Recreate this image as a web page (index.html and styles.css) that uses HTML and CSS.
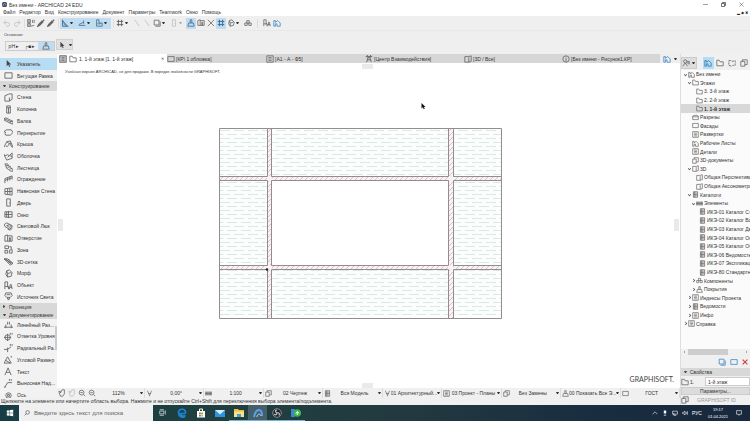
FILE: index.html
```html
<!DOCTYPE html>
<html lang="ru">
<head>
<meta charset="utf-8">
<title>Без имени - ARCHICAD 24 EDU</title>
<link rel="stylesheet" href="styles.css">
</head>
<body>
<svg class="defs" aria-hidden="true">
  <symbol id="undo" viewBox="0 0 10 10"><path d="M4 2 1 4.5 4 7M1 4.5h5a2.200 2.200 0 0 1 0 4.500H4"/></symbol>
  <symbol id="redo" viewBox="0 0 10 10"><path d="M6 2 9 4.500 6 7M9 4.500H4a2.200 2.200 0 0 0 0 4.500H6"/></symbol>
  <symbol id="find" viewBox="0 0 10 10"><path d="M1 1h3v3H1zM1 6h3v3H1z" stroke-width="1.300"/><path d="M7 1v4M9 1v4M5 9l4-1"/></symbol>
  <symbol id="dropper" viewBox="0 0 10 10"><path d="M1 9l1-2 4-4 1 1-4 4zM5.500 2.500l2 2M6.500 3.500 9 1" stroke-width="1.600"/></symbol>
  <symbol id="angle" viewBox="0 0 10 10"><path d="M2 1v8h7M2 2l6 7M3 5l3 3" stroke-width="1.200"/></symbol>
  <symbol id="slope" viewBox="0 0 10 10"><path d="M1 8h8M1 7l6-3M7 2v4"/></symbol>
  <symbol id="snap" viewBox="0 0 10 10"><path d="M2 1v8h7V5H5V1z" /><path d="M3 6h4"/></symbol>
  <symbol id="grid" viewBox="0 0 10 10"><path d="M3 1v8M7 1v8M1 3h8M1 7h8" stroke-width="1.200"/></symbol>
  <symbol id="sq" viewBox="0 0 10 10"><path d="M1.500 1.500h6v6h-6zM3 9h6V3"/></symbol>
  <symbol id="line" viewBox="0 0 10 10"><path d="M2 1l6 8"/></symbol>
  <symbol id="frame" viewBox="0 0 10 10"><path d="M1 2h8v6H1z"/></symbol>
  <symbol id="cursor" viewBox="0 0 10 10"><path class="fill" d="M3 1v7l1.600-1.500L6 9l1-.5-1.300-2.400H8z"/></symbol>
  <symbol id="wall" viewBox="0 0 10 10"><path d="M1 3l5-2h3v6L6 9H1zM6 9V5"/></symbol>
  <symbol id="column" viewBox="0 0 10 10"><path d="M3 1h4v8H3zM3 3h4M5 3v6"/></symbol>
  <symbol id="beam" viewBox="0 0 10 10"><path d="M0 3l2-1 8 4v3L7 8 0 4.500zM7 8V6l3 0M7 6 0 3"/></symbol>
  <symbol id="slab" viewBox="0 0 10 10"><path d="M0 4l3-2h5l2 3-3 3H2l-1-2 1-1z"/></symbol>
  <symbol id="roof" viewBox="0 0 10 10"><path d="M0 8l3-6 4-1 3 7-2-1-1-4-3 4H2M3 2l3 2"/></symbol>
  <symbol id="shell" viewBox="0 0 10 10"><path d="M0 3l2 1 2-1 2 1 3-3v6L3 9zM4 6l2-2 3 1"/></symbol>
  <symbol id="stair" viewBox="0 0 10 10"><path d="M1 1h3l1 2 2 1 1 2 2 1v2H7L5 7 3 6 2 3zM2 3l3 0M4 5l3-1M6 7l3-1"/></symbol>
  <symbol id="rail" viewBox="0 0 10 10"><path d="M1 9V4l8-3v4M1 6l8-3M4 3v4M6.500 2v4"/></symbol>
  <symbol id="curtain" viewBox="0 0 10 10"><path d="M1 2l8-1v8L1 8zM4 2v6M6.500 1.500v7M1 5h8"/></symbol>
  <symbol id="door" viewBox="0 0 10 10"><path d="M3 1h4v8H3zM6 5v1"/></symbol>
  <symbol id="window" viewBox="0 0 10 10"><path d="M1 2h8v6H1zM5 1v8M3 2v6M1 5h8"/></symbol>
  <symbol id="sky" viewBox="0 0 10 10"><path d="M0 3l3-2 6 3v2L6 8 1 5zM3 4l3-1 2 2-2 1zM4 8l3 1 2-2"/></symbol>
  <symbol id="opening" viewBox="0 0 10 10"><path d="M1 2l3-1v7H1zM4 2h5v6H4M6 4v4M6 4h1v4"/></symbol>
  <symbol id="zone" viewBox="0 0 10 10"><path d="M1 1h4v3H1zM1 6h3v3H1zM6 2h2v3M6 6l3-1v4H6z"/></symbol>
  <symbol id="mesh" viewBox="0 0 10 10"><path d="M0 2l4 0 6 5-3 2zM2 2l6 6M0 2l7 4 3 1M3 4l3-1M5 6l3-1"/></symbol>
  <symbol id="morph" viewBox="0 0 10 10"><path d="M3 2l3-1 3 3-1 4-4 1-2-3zM3 2l1 3 4-1M4 5v4"/></symbol>
  <symbol id="object" viewBox="0 0 10 10"><path d="M1 9V1h3v6M1 6h4v3M6 9l1-5h1l1 5M6 7h3"/></symbol>
  <symbol id="lamp" viewBox="0 0 10 10"><path d="M2 1h6l1 3-2 2H3L1 4zM3 3h4M4 6v2h2V6M5 8v1"/></symbol>
  <symbol id="dim" viewBox="0 0 10 10"><path d="M0 8h10M2 5v4M8 5v4M4 5V2M6 5V2"/></symbol>
  <symbol id="level" viewBox="0 0 10 10"><circle cx="4" cy="6" r="3"/><path d="M0 6h8M4 2v8M7 3V1M9 3V1"/></symbol>
  <symbol id="radial" viewBox="0 0 10 10"><path d="M0 6h4l4-3M4 4v5M7 2V0M9 2V0"/></symbol>
  <symbol id="angdim" viewBox="0 0 10 10"><path d="M0 9l4-7 4 7zM2 6l5 3M8 3V1"/></symbol>
  <symbol id="text" viewBox="0 0 10 10"><path d="M1 9l3.500-8L8 9M2.500 6h4"/></symbol>
  <symbol id="label" viewBox="0 0 10 10"><path d="M1 9l3-5h5M6 2V0M8 2V0M0 9h2"/></symbol>
  <symbol id="axis" viewBox="0 0 10 10"><circle cx="5" cy="5" r="3"/><path d="M4 4h2v2H4z"/></symbol>
  <symbol id="folder" viewBox="0 0 10 10"><path d="M1 8.500V1.500h3l1 2h4v5z"/></symbol>
  <symbol id="house" viewBox="0 0 10 10"><path d="M1 9V2h2v2l3-2 3 3v4H5V6H3v3z"/></symbol>
  <symbol id="cut" viewBox="0 0 10 10"><path d="M1 3l2-1h4l2 1v5H1zM1 4h8"/></symbol>
  <symbol id="sheet" viewBox="0 0 10 10"><path d="M1 1h8v8H1zM3 3h4M3 5h4M3 7h4"/></symbol>
  <symbol id="cube" viewBox="0 0 10 10"><path d="M1 2h5l3-1v7L6 9H1zM6 9V3"/></symbol>
  <symbol id="table" viewBox="0 0 10 10"><path d="M2 1h6v8H2zM2 3h6M2 5h6M2 7h6M4 1v8"/></symbol>
  <symbol id="wide" viewBox="0 0 10 10"><path d="M0 3h10v4H0zM2 3v4M4 3v4M6 3v4M8 3v4M0 5h10"/></symbol>
  <symbol id="comp" viewBox="0 0 10 10"><path d="M1 5h3v3H1zM6 5h3v3H6zM3.500 2h3v3h-3z"/></symbol>
  <symbol id="cover" viewBox="0 0 10 10"><path d="M1 9l1-4h6l1 4zM4 5V1h2v4"/></symbol>
  <symbol id="copy" viewBox="0 0 10 10"><path d="M1 3h5v6H1zM3 3V1h6v6H6"/></symbol>
  <symbol id="map" viewBox="0 0 10 10"><path d="M1 2h3l1 1 4-1v6H6L5 9 1 8z" stroke-dasharray="3 1"/></symbol>
  <symbol id="zoomi" viewBox="0 0 10 10"><circle cx="4.500" cy="4.500" r="3"/><path d="M7 7l2 2M3 4.500h3"/></symbol>
  <symbol id="hand" viewBox="0 0 10 10"><path d="M1 3l2 0 0 2 2-4h3v5L6 9H3z"/></symbol>
  <symbol id="cam" viewBox="0 0 10 10"><circle cx="4" cy="3" r="2"/><path d="M1 9l3-4 3 4M6 3h3v4M6 5h3"/></symbol>
  <symbol id="pen" viewBox="0 0 10 10"><path d="M2 1l3 7 3-7M3 5h4M5 8v1"/></symbol>
  <symbol id="tower" viewBox="0 0 10 10"><path d="M2 9l2-6h2l2 6M1 2h8M3 6h4M3 0v3M7 0v3" stroke-width="1.200"/></symbol>
  <symbol id="info" viewBox="0 0 10 10"><circle cx="5" cy="5" r="4"/><path d="M5 4v4M5 2v1"/></symbol>
  <symbol id="cross" viewBox="0 0 10 10"><path d="M1 1l8 8M9 1 1 9"/></symbol>
</svg>

<header class="titlebar">
  <svg class="logo" viewBox="0 0 10 10"><rect width="10" height="10" rx="3" fill="#3c5068"/><path d="M2 8c0-5 5-7 6-1" stroke="#a8c8e8" stroke-width="1.500" fill="none"/></svg>
  <span class="grow">Без имени - ARCHICAD 24 EDU</span>
  <span class="winbtns">
    <button aria-label="Свернуть"><svg viewBox="0 0 10 10"><path d="M0 5h10"/></svg></button>
    <button aria-label="Развернуть"><svg viewBox="0 0 10 10"><path d="M1 3h6v6H1zM3 3V1h6v6H7" stroke-width="1.500"/></svg></button>
    <button aria-label="Закрыть"><svg viewBox="0 0 10 10"><use href="#cross"/></svg></button>
  </span>
</header>
<nav class="menubar">
  <a href="#">Файл</a><a href="#">Редактор</a><a href="#">Вид</a><a href="#">Конструирование</a><a href="#">Документ</a><a href="#">Параметры</a><a href="#">Teamwork</a><a href="#">Окно</a><a href="#">Помощь</a>
  <span class="docbtns">▂ ◆ ✖</span>
</nav>

<section class="toolbars">
  <div class="tools">
    <button class="t faint"><svg><use href="#undo"/></svg></button>
    <button class="t faint"><svg><use href="#redo"/></svg></button>
    <i class="sep"></i>
    <button class="t"><svg><use href="#find"/></svg></button>
    <button class="t"><svg><use href="#dropper"/></svg></button>
    <button class="t"><svg><use href="#dropper"/></svg></button>
    <i class="sep"></i>
    <button class="t on drop"><svg><use href="#angle"/></svg></button>
    <button class="t on drop"><svg><use href="#slope"/></svg></button>
    <button class="t on drop"><svg><use href="#snap"/></svg></button>
    <i class="sep"></i>
    <button class="t drop"><svg><use href="#grid"/></svg></button>
    <button class="t faint"><svg><use href="#line"/></svg></button>
    <button class="t faint"><svg><use href="#line"/></svg></button>
    <button class="t drop"><svg><use href="#sq"/></svg></button>
    <button class="t drop faint"><svg><use href="#door"/></svg></button>
    <button class="t on"><svg><use href="#cover"/></svg></button>
    <button class="t"><svg><use href="#opening"/></svg></button>
    <button class="t"><svg><use href="#cross"/></svg></button>
    <button class="t on"><svg><use href="#grid"/></svg></button>
    <button class="t drop"><svg><use href="#morph"/></svg></button>
    <button class="t"><svg><use href="#comp"/></svg></button>
    <i class="sep wide"></i>
    <button class="t"><svg><use href="#object"/></svg></button>
    <button class="t blue"><svg><use href="#house"/></svg></button>
  </div>
  <div class="caption">Основная:</div>
  <div class="modes">
    <span class="modebox"><button>рН ▸</button><button>┌■ ▸</button><button class="on"><svg><use href="#cover"/></svg></button></span>
    <button class="ptr"><svg><use href="#cursor"/></svg><i class="tri"></i></button>
  </div>
</section>

<main class="work">
  <div class="desk">
  <div class="panes">
  <aside class="toolbox">
    <div class="grp top">
      <button class="tool sel"><svg><use href="#cursor"/></svg><span>Указатель</span></button>
      <button class="tool"><svg><use href="#frame"/></svg><span>Бегущая Рамка</span></button>
    </div>
    <h2 class="head tall"><b class="open"></b>Конструирование</h2>
    <div class="grp build">
      <button class="tool"><svg><use href="#wall"/></svg><span>Стена</span></button>
      <button class="tool"><svg><use href="#column"/></svg><span>Колонна</span></button>
      <button class="tool"><svg><use href="#beam"/></svg><span>Балка</span></button>
      <button class="tool"><svg><use href="#slab"/></svg><span>Перекрытие</span></button>
      <button class="tool"><svg><use href="#roof"/></svg><span>Крыша</span></button>
      <button class="tool"><svg><use href="#shell"/></svg><span>Оболочка</span></button>
      <button class="tool"><svg><use href="#stair"/></svg><span>Лестница</span></button>
      <button class="tool"><svg><use href="#rail"/></svg><span>Ограждение</span></button>
      <button class="tool"><svg><use href="#curtain"/></svg><span>Навесная Стена</span></button>
      <button class="tool"><svg><use href="#door"/></svg><span>Дверь</span></button>
      <button class="tool"><svg><use href="#window"/></svg><span>Окно</span></button>
      <button class="tool"><svg><use href="#sky"/></svg><span>Световой Люк</span></button>
      <button class="tool"><svg><use href="#opening"/></svg><span>Отверстие</span></button>
      <button class="tool"><svg><use href="#zone"/></svg><span>Зона</span></button>
      <button class="tool"><svg><use href="#mesh"/></svg><span>3D-сетка</span></button>
      <button class="tool"><svg><use href="#morph"/></svg><span>Морф</span></button>
      <button class="tool"><svg><use href="#object"/></svg><span>Объект</span></button>
      <button class="tool"><svg><use href="#lamp"/></svg><span>Источник Света</span></button>
    </div>
    <h2 class="head"><b></b>Проекция</h2>
    <h2 class="head"><b class="open"></b>Документирование</h2>
    <div class="grp docs">
      <button class="tool"><svg><use href="#dim"/></svg><span>Линейный Раз...</span></button>
      <button class="tool"><svg><use href="#level"/></svg><span>Отметка Уровня</span></button>
      <button class="tool"><svg><use href="#radial"/></svg><span>Радиальный Ра...</span></button>
      <button class="tool"><svg><use href="#angdim"/></svg><span>Угловой Размер</span></button>
      <button class="tool"><svg><use href="#text"/></svg><span>Текст</span></button>
      <button class="tool"><svg><use href="#label"/></svg><span>Выносная Над...</span></button>
      <button class="tool"><svg><use href="#axis"/></svg><span>Ось</span></button>
      <i class="vthumb"></i>
    </div>
  </aside>

  <section class="center">
    <nav class="tabs">
      <a href="#" class="tab active"><svg class="gridicon"><use href="#sheet"/></svg><svg><use href="#folder"/></svg><span class="grow">1. 1-й этаж [1. 1-й этаж]</span><small>✕</small></a>
      <a href="#" class="tab"><svg><use href="#frame"/></svg><span>[КР\ 1 обложка]</span></a>
      <a href="#" class="tab mid"><svg><use href="#sheet"/></svg><span>[А1 - А - Ф5]</span></a>
      <a href="#" class="tab mid"><svg><use href="#tower"/></svg><span>[Центр Взаимодействия]</span></a>
      <a href="#" class="tab mid"><svg><use href="#cube"/></svg><span>[3D / Все]</span></a>
      <a href="#" class="tab"><svg><use href="#info"/></svg><span>[Без имени - Рисунок1.КР]</span></a>
      <button class="tabend"><svg><use href="#house"/></svg><i class="tri"></i></button>
    </nav>
    <div class="canvas">
      <svg class="plan" viewBox="57 63 623 325">
        <defs>
          <pattern id="fillc" width="14" height="8" patternUnits="userSpaceOnUse" x="219" y="128">
            <path d="M1 2.500h10M-6 6.500h10M8 6.500h10" stroke="#dae9e3" stroke-width="1"/>
          </pattern>
          <pattern id="hatch" width="5" height="5" patternUnits="userSpaceOnUse">
            <path d="M-1 6 6-1M-1 1l2-2M4 6l2-2" stroke="#d3b4bb" stroke-width=".8"/>
          </pattern>
        </defs>
        <rect x="219.500" y="128.500" width="282" height="190" fill="#fbfefd"/>
        <rect x="219.500" y="128.500" width="282" height="190" fill="url(#fillc)"/>
        <rect x="271.500" y="180.500" width="177" height="85" fill="#fff"/>
        <path d="M267 129h5v189h-5zM448 129h5v189h-5zM220 176h281v5H220zM220 265h281v5H220z" fill="#f8f4f5"/>
        <path d="M267 129h5v47h-5zM267 181h5v84h-5zM267 270h5v48h-5zM448 129h5v47h-5zM448 181h5v84h-5zM448 270h5v48h-5zM220 176h47v5h-47zM272 176h176v5H272zM453 176h48v5h-48zM220 265h47v5h-47zM272 265h176v5H272zM453 265h48v5h-48z" fill="url(#hatch)"/>
        <g fill="none" stroke="#958c8f" stroke-width="1">
          <path d="M219.500 128.500h282v190h-282z"/>
          <path d="M267.500 128.500v48h-48M271.500 128.500v48h177v-48M453.500 128.500v48h48M219.500 180.500h48v85h-48M271.500 180.500h177v85h-177zM501.500 180.500h-48v85h48M219.500 269.500h48v49M271.500 318.500v-49h177v49M453.500 318.500v-49h48"/>
        </g>
        <circle cx="267" cy="269.500" r="1.300" fill="#222"/>
        <path d="M421.500 103v5.500l1.300-1.200 1 2 1-.5-1-1.800h1.700z" fill="#111"/>
      </svg>
      <p class="notice">Учебная версия ARCHICAD, не для продажи. В порядке любезности GRAPHISOFT.</p>
      <p class="brand">GRAPHISOFT.</p>
      <i class="grip n"></i><i class="grip s"></i><i class="grip w"></i><i class="grip e"></i>
    </div>
    <div class="viewbar">
      <div class="zooms"><svg><use href="#hand"/></svg><svg class="faint"><use href="#hand"/></svg><svg><use href="#zoomi"/></svg><svg><use href="#zoomi"/></svg></div>
      <label class="opt first"><select aria-label="Масштаб экрана"><option>112%</option></select><i class="tri"></i></label>
      <label class="opt"><svg><use href="#pen"/></svg><select aria-label="Угол"><option>0,00°</option></select><i class="tri"></i></label>
      <label class="opt"><svg><use href="#wide"/></svg><select aria-label="Масштаб"><option>1:100</option></select><i class="tri"></i></label>
      <label class="opt"><svg><use href="#copy"/></svg><select aria-label="Слои"><option>02 Чертеж</option></select><i class="tri"></i></label>
      <label class="opt"><svg><use href="#table"/></svg><select aria-label="Модель"><option>Вся Модель</option></select><i class="tri"></i></label>
      <label class="opt"><svg><use href="#pen"/></svg><select aria-label="Перья"><option>01 Архитектурный...</option></select><i class="tri"></i></label>
      <label class="opt"><svg><use href="#sheet"/></svg><select aria-label="Вид"><option>03 Проект - Планы</option></select><i class="tri"></i></label>
      <label class="opt"><svg><use href="#copy"/></svg><select aria-label="Замена"><option>Без Замены</option></select><i class="tri"></i></label>
      <label class="opt"><svg><use href="#cover"/></svg><select aria-label="Реконструкция"><option>00 Показать Все Э...</option></select><i class="tri"></i></label>
      <label class="opt"><svg><use href="#frame"/></svg><select aria-label="Размеры"><option>ГОСТ</option></select><i class="tri"></i></label>
    </div>
  </section>
  </div>
  <footer class="status">Щелкните на элементе или начертите область выбора. Нажмите и не отпускайте Ctrl+Shift для переключения выбора элемента/подэлемента.</footer>
  </div>

  <aside class="navigator">
    <div class="navtools">
      <button class="cam"><svg><use href="#cam"/></svg><i class="tri"></i></button>
      <button class="on"><svg><use href="#house"/></svg></button>
      <button><svg><use href="#folder"/></svg></button>
      <button><svg><use href="#map"/></svg></button>
      <button><svg><use href="#copy"/></svg></button>
    </div>
    <ul class="tree">
      <li class="l0"><b class="dn"></b><svg><use href="#house"/></svg>Без имени</li>
      <li class="l1"><b class="dn"></b><svg><use href="#folder"/></svg>Этажи</li>
      <li class="l2"><b></b><svg><use href="#folder"/></svg>3. 3-й этаж</li>
      <li class="l2"><b></b><svg><use href="#folder"/></svg>2. 2-й этаж</li>
      <li class="l2 cur"><b></b><svg><use href="#folder"/></svg>1. 1-й этаж</li>
      <li class="l1"><b></b><svg><use href="#cut"/></svg>Разрезы</li>
      <li class="l1"><b></b><svg><use href="#frame"/></svg>Фасады</li>
      <li class="l1"><b></b><svg><use href="#sheet"/></svg>Развертки</li>
      <li class="l1"><b></b><svg><use href="#house"/></svg>Рабочие Листы</li>
      <li class="l1"><b></b><svg><use href="#sheet"/></svg>Детали</li>
      <li class="l1"><b></b><svg><use href="#copy"/></svg>3D-документы</li>
      <li class="l1"><b class="dn"></b><svg><use href="#cube"/></svg>3D</li>
      <li class="l2"><b></b><svg><use href="#cube"/></svg>Общая Перспектива</li>
      <li class="l2"><b></b><svg><use href="#cube"/></svg>Общая Аксонометри</li>
      <li class="l1"><b class="dn"></b><svg><use href="#table"/></svg>Каталоги</li>
      <li class="l2"><b class="dn"></b><svg><use href="#wide"/></svg>Элементы</li>
      <li class="l3"><b></b><svg><use href="#table"/></svg>ИКЭ-01 Каталог Сте</li>
      <li class="l3"><b></b><svg><use href="#table"/></svg>ИКЭ-02 Каталог Вси</li>
      <li class="l3"><b></b><svg><use href="#table"/></svg>ИКЭ-03 Каталог Две</li>
      <li class="l3"><b></b><svg><use href="#table"/></svg>ИКЭ-04 Каталог Око</li>
      <li class="l3"><b></b><svg><use href="#table"/></svg>ИКЭ-05 Каталог Объ</li>
      <li class="l3"><b></b><svg><use href="#table"/></svg>ИКЭ-06 Ведомость П</li>
      <li class="l3"><b></b><svg><use href="#table"/></svg>ИКЭ-07 Экспликаци</li>
      <li class="l3"><b></b><svg><use href="#table"/></svg>ИКЭ-80 Стандартны</li>
      <li class="l2"><b class="rt"></b><svg><use href="#comp"/></svg>Компоненты</li>
      <li class="l2"><b class="rt"></b><svg><use href="#cover"/></svg>Покрытия</li>
      <li class="l1"><b class="rt"></b><svg><use href="#sheet"/></svg>Индексы Проекта</li>
      <li class="l1"><b class="rt"></b><svg><use href="#table"/></svg>Ведомости</li>
      <li class="l1"><b class="rt"></b><svg><use href="#sheet"/></svg>Инфо</li>
      <li class="l0"><b class="rt"></b><svg><use href="#sheet"/></svg>Справка</li>
    </ul>
    <div class="hscroll"><i class="lf"></i><span></span><i class="rg"></i></div>
    <div class="actions">
      <button class="blue"><svg><use href="#sq"/></svg></button><button class="blue"><svg><use href="#frame"/></svg></button><button class="red"><svg><use href="#cross"/></svg></button>
    </div>
    <h2 class="head"><b class="open"></b>Свойства</h2>
    <div class="prop"><svg><use href="#folder"/></svg><label for="story">1.</label><input id="story" value="1-й этаж"></div>
    <button class="params">Параметры...</button>
    <div class="gs"><svg><use href="#copy"/></svg><span>GRAPHISOFT ID</span></div>
  </aside>
</main>

<footer class="taskbar">
  <button class="start" aria-label="Пуск"><svg viewBox="0 0 10 10"><path d="M1 2l3.500-.5v3.200H1zM5 1.400 9 1v3.700H5zM1 5.200h3.500v3.200L1 8zM5 5.200h4V9l-4-.5z" fill="#fff"/></svg></button>
  <label class="search"><svg viewBox="0 0 10 10"><circle cx="6" cy="4" r="3"/><path d="M4 6 1 9"/></svg><input aria-label="Поиск" placeholder="Введите здесь текст для поиска"></label>
  <div class="apps">
    <button aria-label="Задачи"><svg viewBox="0 0 10 10"><path d="M1 3h6v4H1zM1 1h6M1 9h6M9 2v6" fill="none" stroke="#e4eaec"/></svg></button>
    <button aria-label="Edge"><svg viewBox="0 0 10 10"><path d="M8.500 5.500H3.500C3.500 8 6.500 8.500 8.500 7.500M1.200 5C2 0 9 0 8.600 5.500M2 4.500C1 8 4 10 8 8.800" fill="none" stroke="#1c84d8" stroke-width="1.600"/></svg></button>
    <button aria-label="Магазин"><svg viewBox="0 0 10 10"><path d="M1 3h8v6.500H1z" fill="#fff"/><path d="M3.500 3V1h3v2" fill="none" stroke="#fff"/><path d="M3 4.500h1.800v1.800H3z" fill="#e8563a"/><path d="M5.200 4.500H7v1.800H5.200z" fill="#7bb33c"/><path d="M3 6.700h1.800v1.800H3z" fill="#2d8fd8"/><path d="M5.200 6.700H7v1.800H5.200z" fill="#e8b530"/></svg></button>
    <button aria-label="Почта"><svg viewBox="0 0 10 10"><path d="M0 2h10v7H0z" fill="#2b93df"/><path d="M0 2h10L5 6.500z" fill="#d4edfc"/></svg></button>
    <button class="run" aria-label="Проводник"><svg viewBox="0 0 10 10"><path d="M0 1h4l1 1h5v7H0z" fill="#e8c04b"/><path d="M0 3.500h10V9H0z" fill="#fbe08a"/><path d="M3 6h4v3H3z" fill="#4a9fd8"/></svg></button>
    <button class="run cur" aria-label="ArchiCAD"><svg viewBox="0 0 10 10"><path d="M1 9C2 4 4 2 6 2s3 2 3 6" fill="none" stroke="#5ba0ea" stroke-width="2"/><path d="M4 9c0-3 3-4 4-1" fill="none" stroke="#b7d8fa" stroke-width="1"/></svg></button>
    <button class="run" aria-label="OBS"><svg viewBox="0 0 10 10"><circle cx="5" cy="5" r="4.300" fill="#22252b" stroke="#9aa2a8" stroke-width=".8"/><path d="M5 5c-2-1-2-3 0-3M5 5c2-1 3 1 2 2.500M5 5c0 2-2 2.500-3 1" fill="none" stroke="#c8ced2" stroke-width="1.100"/></svg></button>
    <button class="run" aria-label="Связь"><svg viewBox="0 0 10 10"><path d="M0 1h4v8H0z" fill="#3b86cf"/><circle cx="6.300" cy="5" r="3.700" fill="#3cb84a"/><path d="M4.800 5.500 6.300 3.500 8 5.500M6.300 4v3" stroke="#fff" fill="none"/></svg></button>
  </div>
  <div class="tray">
    <svg viewBox="0 0 10 10"><path d="M1 7l4-4 4 4"/></svg>
    <svg viewBox="0 0 10 10"><path d="M5 1v5M5 8v1" stroke-width="4"/></svg>
    <svg viewBox="0 0 10 10"><path d="M1 2h8v5H1zM3 9h4M3 5v4"/></svg>
    <svg viewBox="0 0 10 10"><path d="M1 4v2h1l3 2V2L2 4zM7 3v4M9 2v6"/></svg>
    <span class="lang">РУС</span>
    <time>19:17<br>01.04.2021</time>
    <svg class="note" viewBox="0 0 10 10"><path d="M1 1h8v6H6L5 9 4 7H1z"/></svg>
  </div>
</footer>
</body>
</html>
```

FILE: styles.css
```css
* { box-sizing: border-box; }
body {
  margin: 0;
  height: 100vh;
  display: flex;
  flex-direction: column;
  overflow: hidden;
  background: #fff;
  color: #333;
  font: 5px/8px "Liberation Sans", Arial, sans-serif;
}
button, input, select {
  font: inherit;
  color: inherit;
  border: 0;
  margin: 0;
  padding: 0;
  background: none;
  min-width: 0;
}
button { display: flex; align-items: center; justify-content: center; }
a { color: inherit; text-decoration: none; }
p, h2, ul { margin: 0; padding: 0; }
svg {
  width: 8px;
  height: 8px;
  flex: none;
  fill: none;
  stroke: #666;
  stroke-width: 1;
}
.defs { position: absolute; width: 0; height: 0; }
.fill { fill: #444; stroke: none; }
.grow { flex: 1; }
.faint { opacity: .35; }
.blue svg { stroke: #3d86c6; }
.red svg { stroke: #d0453a; stroke-width: 2; }
.tri {
  flex: none;
  box-sizing: content-box;
  width: 1px;
  height: 0;
  border: 1px solid transparent;
  border-top: 2px solid #333;
  border-bottom: 0;
}

/* title and menu */
.titlebar { flex: none; display: flex; align-items: center; height: 9px; padding: 0 6px 0 2px; gap: 2px; }
.titlebar .logo { width: 5px; height: 5px; stroke: none; }
.winbtns { display: flex; gap: 13px; }
.winbtns svg { width: 5px; height: 5px; stroke: #444; }
.menubar { flex: none; display: flex; height: 7px; line-height: 7px; padding: 0 2px 0 3px; gap: 4px; }
.docbtns { margin-left: auto; font-size: 4px; }

/* toolbars */
.toolbars { flex: none; height: 38px; background: #efefef; }
.tools { display: flex; align-items: center; height: 15px; padding-left: 2px; border-bottom: 1px solid #e8e8e8; }
.t { width: 10px; height: 11px; }
.t.drop { width: 17px; justify-content: space-between; padding: 0 4px 0 1px; }
.t.drop::after { content: ""; border: 1px solid transparent; border-top: 2px solid #333; border-bottom: 0; width: 1px; }
.t.on { background: #c0dcf0; }
.t.on svg { stroke: #3f6a90; }
.sep { width: 1px; height: 9px; margin: 0 1px 0 2px; background: #ddd; }
.sep.wide { margin: 0 4px; }
.caption { height: 8px; padding-left: 4px; line-height: 7px; font-size: 4px; }
.modes { display: flex; align-items: flex-start; gap: 1px; padding-left: 5px; }
.modebox { display: flex; margin-top: 2px; height: 10px; border: 1px solid #ccc; }
.modebox button { width: 16px; }
.modebox .on { background: #c0dcf0; }
.ptr { width: 17px; height: 11px; gap: 3px; background: #e0e0e0; border: 1px solid #d0d0d0; }

/* work area */
.work { flex: 1; min-height: 0; display: flex; }
.desk { flex: 1; min-width: 0; display: flex; flex-direction: column; }
.panes { flex: 1; min-height: 0; display: flex; }
.toolbox {
  width: 57px;
  flex: none;
  display: flex;
  flex-direction: column;
  padding-top: 4px;
  background: #f2f2f2;
  overflow: hidden;
}
.grp { display: flex; flex-direction: column; min-height: 0; position: relative; }
.top { flex: 200 1 0; }
.build { flex: 1800 1 0; }
.docs { flex: 675 1 0; overflow: hidden; }
.tool { flex: 1; min-height: 0; justify-content: flex-start; gap: 4px; padding-left: 4px; white-space: nowrap; }
.tool svg { width: 9px; height: 9px; }
.docs .tool { flex: none; height: calc(100% / 6.75); }
.sel { background: #b8dcf2; }
.vthumb { position: absolute; right: 0; top: 7px; width: 2px; height: 24px; background: #ccc; }
.head {
  flex: none;
  display: flex;
  align-items: center;
  gap: 3px;
  height: 8px;
  padding-left: 3px;
  font: inherit;
  background: #d8d8d8;
}
.tall { height: 10px; }
.head b { border: 1px solid transparent; border-left: 2px solid #444; border-right: 0; width: 0; height: 1px; box-sizing: content-box; margin-right: 1px; }
.head .open { border: 1px solid transparent; border-top: 2px solid #444; border-bottom: 0; width: 1px; height: 0; margin-right: 0; }

.center { flex: 1; min-width: 0; display: flex; flex-direction: column; }
.tabs { flex: none; display: flex; height: 9px; background: #d6d6d6; }
.tab { flex: 1; display: flex; align-items: center; gap: 1px; min-width: 0; white-space: nowrap; }
.tab.active { flex: none; width: 110px; background: #fff; padding: 0 3px 0 2px; gap: 2px; }
.tab.active small { font-size: 4px; }
.mid { padding-left: 1px; }
.gridicon { background: #ccc; }
.tabend { width: 20px; gap: 3px; background: #eee; }
.tabend svg { stroke: #3d86c6; }
.canvas { flex: 1; min-height: 0; position: relative; background: #fff; }
.plan { display: block; width: 100%; height: 100%; stroke: none; }
.notice { position: absolute; left: 8px; top: 5px; font-size: 4px; }
.brand { position: absolute; right: 6px; bottom: 4px; font: 7px/10px Lato, sans-serif; color: #444; }
.grip { position: absolute; background: #eaeaea; }
.n, .s { left: 49%; width: 11px; height: 5px; }
.n { top: 1px; }
.s { bottom: 0; }
.w, .e { top: 48%; width: 5px; height: 12px; }
.w { left: 1px; }
.e { right: 1px; }
.viewbar { flex: none; display: flex; height: 10px; background: #f0f0f0; }
.zooms { display: flex; align-items: center; width: 39px; gap: 2px; padding-left: 1px; }
.opt { flex: 1; display: flex; align-items: center; min-width: 0; padding: 0 1px; border-right: 1px solid #ddd; }
.opt.first { flex: none; width: 49px; }
.opt svg { width: 7px; height: 7px; }
.opt select { flex: 1; appearance: none; text-align: center; text-align-last: center; }
.status { flex: none; height: 7px; line-height: 7px; padding-left: 1px; background: #f0f0f0; white-space: nowrap; }

/* navigator */
.navigator { width: 70px; flex: none; display: flex; flex-direction: column; background: #f0f0f0; border-left: 1px solid #ddd; overflow: hidden; }
.navtools { flex: none; display: flex; align-items: center; height: 16px; padding-top: 2px; gap: 1px; }
.navtools button { width: 12px; height: 12px; }
.navtools svg { width: 8px; height: 8px; }
.navtools .cam { width: 17px; gap: 2px; margin-right: 5px; background: #ddd; border: 1px solid #ccc; }
.navtools .on { background: #b8dcf2; }
.navtools .on svg { stroke: #2f78b4; }
.tree {
  flex: 1;
  min-height: 0;
  display: grid;
  grid-template-rows: repeat(30, minmax(0, 1fr));
  padding-bottom: 21px;
  list-style: none;
  background: #fbfbfb;
}
.tree li { display: flex; align-items: center; gap: 1px; white-space: nowrap; }
.tree svg { width: 7px; height: 7px; }
.tree b { flex: none; width: 3px; height: 3px; }
.tree .dn, .tree .rt { border: solid #555; border-width: 0 1px 1px 0; transform: rotate(45deg) scale(.8); }
.tree .rt { transform: rotate(-45deg) scale(.8); }
.l0 { padding-left: 3px; }
.l1 { padding-left: 7px; }
.l2 { padding-left: 11px; }
.l3 { padding-left: 14px; }
.tree .cur { background: #d8d8d8; font-weight: bold; }
.hscroll { flex: none; display: flex; align-items: center; height: 6px; padding: 0 2px; background: #f0f0f0; }
.hscroll span { width: 40px; height: 6px; margin: 0 auto 0 3px; background: #cdcdcd; }
.hscroll i { border: 1px solid transparent; }
.hscroll .lf { border-right-color: #555; }
.hscroll .rg { border-left-color: #555; }
.actions { flex: none; display: flex; justify-content: flex-end; align-items: center; height: 13px; gap: 4px; padding-right: 2px; }
.red svg { width: 6px; height: 6px; }
.prop { flex: none; display: flex; align-items: center; height: 11px; gap: 1px; }
.prop label { width: 14px; }
.prop input { flex: 1; height: 9px; padding-left: 2px; background: #fff; border: 1px solid #ccc; }
.params { flex: none; height: 8px; background: #dcdcdc; border: 1px solid #ccc; }
.gs { flex: none; display: flex; align-items: center; gap: 8px; height: 10px; color: #999; }

/* taskbar */
.taskbar { flex: none; display: flex; height: 16px; background: linear-gradient(90deg, #173d44, #20403f 30%, #22393f 55%, #1a2c40 80%, #18293d); color: #fff; }
.taskbar svg { stroke: none; }
.start { width: 19px; }
.search { display: flex; align-items: center; width: 134px; gap: 4px; padding-left: 5px; background: #f0f0f0; font-size: 6px; }
.taskbar .search svg { width: 6px; height: 6px; stroke: #444; }
.search input { flex: 1; color: #555; outline: 0; }
.search input::placeholder { color: #666; opacity: 1; }
.apps { display: flex; }
.apps button { width: 19px; border-bottom: 1px solid transparent; }
.apps svg { width: 10px; height: 10px; }
.apps button:first-child svg { width: 7px; height: 7px; }
.apps .run { border-color: #6fb4e4; }
.apps .cur { background: #45606a; }
.tray { display: flex; align-items: center; gap: 4px; margin-left: auto; padding-right: 8px; }
.taskbar .tray svg { width: 6px; height: 6px; stroke: #fff; }
.tray time { text-align: center; font-size: 4px; line-height: 7px; margin: 0 4px 0 2px; }
```
